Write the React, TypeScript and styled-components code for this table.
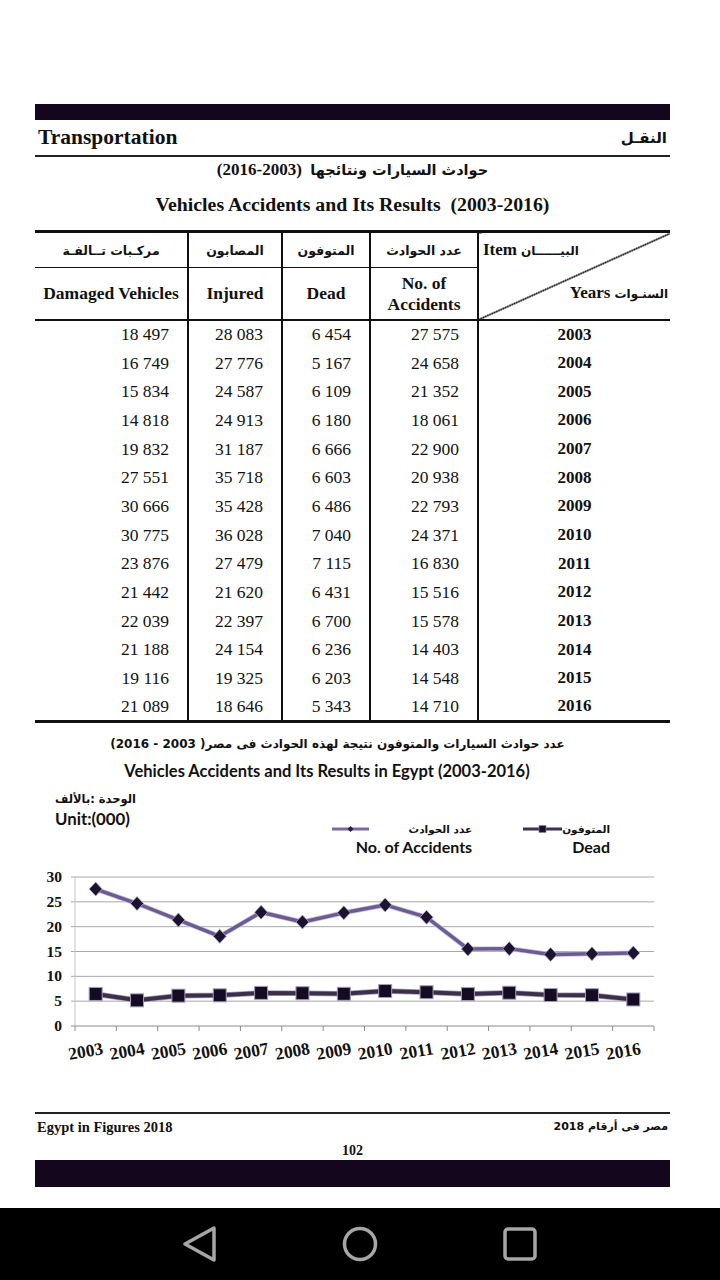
import React from 'react';
import styled, { createGlobalStyle } from 'styled-components';

const SERIF = `"Liberation Serif", "DejaVu Sans", serif`;
const SANS = `Lato, "DejaVu Sans", sans-serif`;
const AR = `"DejaVu Sans", sans-serif`;

const Global = createGlobalStyle`
  html, body { margin: 0; padding: 0; background: #fff; }
  body { font-family: ${SERIF}; color: #111; }
  * { box-sizing: border-box; }
`;

const rows = [
  { y: 2003, acc: '27 575', dead: '6 454', inj: '28 083', dmg: '18 497' },
  { y: 2004, acc: '24 658', dead: '5 167', inj: '27 776', dmg: '16 749' },
  { y: 2005, acc: '21 352', dead: '6 109', inj: '24 587', dmg: '15 834' },
  { y: 2006, acc: '18 061', dead: '6 180', inj: '24 913', dmg: '14 818' },
  { y: 2007, acc: '22 900', dead: '6 666', inj: '31 187', dmg: '19 832' },
  { y: 2008, acc: '20 938', dead: '6 603', inj: '35 718', dmg: '27 551' },
  { y: 2009, acc: '22 793', dead: '6 486', inj: '35 428', dmg: '30 666' },
  { y: 2010, acc: '24 371', dead: '7 040', inj: '36 028', dmg: '30 775' },
  { y: 2011, acc: '16 830', dead: '7 115', inj: '27 479', dmg: '23 876' },
  { y: 2012, acc: '15 516', dead: '6 431', inj: '21 620', dmg: '21 442' },
  { y: 2013, acc: '15 578', dead: '6 700', inj: '22 397', dmg: '22 039' },
  { y: 2014, acc: '14 403', dead: '6 236', inj: '24 154', dmg: '21 188' },
  { y: 2015, acc: '14 548', dead: '6 203', inj: '19 325', dmg: '19 116' },
  { y: 2016, acc: '14 710', dead: '5 343', inj: '18 646', dmg: '21 089' },
];

const accSeries = [27.575, 24.658, 21.352, 18.061, 22.9, 20.938, 22.793, 24.371, 21.9, 15.516, 15.578, 14.403, 14.548, 14.71];
const deadSeries = [6.454, 5.167, 6.109, 6.18, 6.666, 6.603, 6.486, 7.04, 6.8, 6.431, 6.7, 6.236, 6.203, 5.343];

const Screen = styled.div`
  width: 720px;
  height: 1280px;
  display: flex;
  flex-direction: column;
  background: #fff;
`;

const Page = styled.div`
  flex: 1;
  padding: 104px 50px 0 35px;
  display: flex;
  flex-direction: column;
`;

const DarkBar = styled.div<{ $h: number }>`
  height: ${(p) => p.$h}px;
  background: #14061d;
`;

const HeaderRow = styled.div`
  height: 37px;
  display: flex;
  align-items: center;
  justify-content: space-between;
  padding: 0 3px;
  border-bottom: 2px solid #222;
`;

const HeaderEn = styled.span`
  font-family: ${SERIF};
  font-weight: 700;
  font-size: 21.5px;
`;

const HeaderAr = styled.span`
  font-family: ${AR};
  font-weight: 700;
  font-size: 15px;
`;

const TitleAr = styled.div`
  margin-top: 1px;
  line-height: 24px;
  text-align: center;
  font-family: ${SERIF};
  font-weight: 700;
  font-size: 17px;
`;

const ArSpan = styled.span`
  font-family: ${AR};
  font-size: 14.5px;
`;

const TitleEn = styled.div`
  margin-top: 9px;
  line-height: 26px;
  text-align: center;
  font-family: ${SERIF};
  font-weight: 700;
  font-size: 19.8px;
  white-space: pre;
`;

const Table = styled.table`
  margin-top: 13px;
  width: 635px;
  border-collapse: collapse;
  table-layout: fixed;
  border-top: 3px solid #111;
  border-bottom: 3px solid #111;
`;

const HeadAr = styled.th<{ $sep?: boolean }>`
  height: 35px;
  padding: 0;
  font-family: ${AR};
  font-weight: 700;
  font-size: 12.5px;
  text-align: center;
  vertical-align: middle;
  border-bottom: 1px solid #111;
  border-right: ${(p) => (p.$sep ? '2px solid #111' : 'none')};
`;

const HeadEn = styled.th<{ $sep?: boolean }>`
  height: 51px;
  padding: 0;
  font-family: ${SERIF};
  font-weight: 700;
  font-size: 17.5px;
  line-height: 21px;
  text-align: center;
  vertical-align: middle;
  border-bottom: 2px solid #111;
  border-right: ${(p) => (p.$sep ? '2px solid #111' : 'none')};
`;

const ItemCell = styled.th`
  padding: 0;
  vertical-align: top;
  border-bottom: 2px solid #111;
  background: linear-gradient(
    to bottom right,
    transparent calc(50% - 1px),
    #222 calc(50% - 0.5px),
    #222 calc(50% + 0.5px),
    transparent calc(50% + 1px)
  );
`;

const ItemInner = styled.div`
  height: 86px;
  display: flex;
  flex-direction: column;
  justify-content: space-between;
  padding: 8px 2px 16px 4px;
`;

const ItemLabel = styled.div<{ $end?: boolean }>`
  display: flex;
  justify-content: ${(p) => (p.$end ? 'flex-end' : 'flex-start')};
  align-items: baseline;
  gap: 4px;
  line-height: 18px;
`;

const ItemEn = styled.span`
  font-family: ${SERIF};
  font-weight: 700;
  font-size: 17px;
`;

const ItemAr = styled.span`
  font-family: ${AR};
  font-weight: 700;
  font-size: 12px;
`;

const Cell = styled.td<{ $sep?: boolean }>`
  height: 28.5px;
  padding: 0 18px 0 0;
  font-family: ${SERIF};
  font-size: 17.5px;
  text-align: right;
  vertical-align: middle;
  border-right: ${(p) => (p.$sep ? '2px solid #111' : 'none')};
`;

const YearCell = styled.td`
  height: 28.5px;
  padding: 0;
  font-family: ${SERIF};
  font-weight: 700;
  font-size: 17px;
  text-align: center;
  vertical-align: middle;
`;

const ChartTitleAr = styled.div`
  margin-top: 13px;
  line-height: 20px;
  text-align: center;
  font-family: ${AR};
  font-weight: 700;
  font-size: 12px;
  padding-right: 30px;
`;

const ChartTitleEn = styled.div`
  margin-top: 6px;
  line-height: 22px;
  text-align: center;
  font-family: ${SANS};
  font-weight: 700;
  font-size: 16.5px;
  padding-right: 51px;
`;

const ChartHead = styled.div`
  display: flex;
  align-items: flex-start;
  margin-top: 8px;
`;

const Unit = styled.div`
  display: flex;
  flex-direction: column;
  align-items: flex-start;
  padding-left: 20px;
`;

const UnitAr = styled.div`
  line-height: 18px;
  font-family: ${AR};
  font-weight: 700;
  font-size: 11.5px;
`;

const UnitEn = styled.div`
  margin-top: 2px;
  line-height: 18px;
  font-family: ${SANS};
  font-weight: 700;
  font-size: 16.8px;
`;

const Legend = styled.div`
  margin-left: auto;
  margin-top: 30px;
  padding-right: 60px;
  display: flex;
  gap: 51px;
`;

const LegendItem = styled.div`
  display: flex;
  flex-direction: column;
`;

const LegendTop = styled.div<{ $gap: number }>`
  display: flex;
  align-items: center;
  justify-content: space-between;
  gap: ${(p) => p.$gap}px;
  height: 18px;
`;

const LegendAr = styled.span`
  font-family: ${AR};
  font-weight: 700;
  font-size: 10.5px;
`;

const LegendEn = styled.div`
  line-height: 18px;
  text-align: right;
  font-family: ${SANS};
  font-weight: 700;
  font-size: 16px;
`;

const ChartBox = styled.div`
  margin-top: 10px;
  height: 200px;
`;

const Footer = styled.div`
  margin-top: 46px;
  border-top: 2px solid #222;
  padding: 4px 2px 0;
  display: flex;
  justify-content: space-between;
  line-height: 18px;
`;

const FooterEn = styled.span`
  font-family: ${SERIF};
  font-weight: 700;
  font-size: 14.5px;
`;

const FooterAr = styled.span`
  font-family: ${AR};
  font-weight: 700;
  font-size: 11px;
`;

const PageNo = styled.div`
  margin-top: 6px;
  line-height: 18px;
  text-align: center;
  font-family: ${SERIF};
  font-weight: 700;
  font-size: 14px;
`;

const NavBar = styled.div`
  height: 72px;
  background: #000;
  display: flex;
  align-items: center;
  justify-content: center;
  gap: 124px;
`;

const NavIcon = styled.svg`
  width: 36px;
  height: 36px;
  display: block;
`;

function Swatch({ kind }: { kind: 'acc' | 'dead' }) {
  if (kind === 'acc') {
    return (
      <svg width="37" height="8" viewBox="0 0 37 8">
        <line x1="0" y1="4" x2="37" y2="4" stroke="#7a6aa0" strokeWidth="3" />
        <polygon points="18.5,1 21.5,4 18.5,7 15.5,4" fill="#2a1e40" />
      </svg>
    );
  }
  return (
    <svg width="39" height="8" viewBox="0 0 39 8">
      <line x1="0" y1="4" x2="39" y2="4" stroke="#3d3252" strokeWidth="3" />
      <rect x="16" y="0.5" width="7" height="7" fill="#1a1028" stroke="#8a80a6" strokeWidth="0.6" />
    </svg>
  );
}

function Chart() {
  const W = 635;
  const H = 200;
  const X0 = 40;
  const X1 = 619;
  const Y0 = 160;
  const YT = 11;
  const cw = (X1 - X0) / 14;
  const sy = (Y0 - YT) / 30;
  const px = (i: number) => X0 + cw * (i + 0.5);
  const py = (v: number) => Y0 - v * sy;
  const ticks = [0, 5, 10, 15, 20, 25, 30];
  const accPts = accSeries.map((v, i) => `${px(i)},${py(v)}`).join(' ');
  const deadPts = deadSeries.map((v, i) => `${px(i)},${py(v)}`).join(' ');
  return (
    <svg width={W} height={H} viewBox={`0 0 ${W} ${H}`} style={{ display: 'block' }}>
      {ticks.map((t) => (
        <g key={t}>
          {t > 0 && <line x1={36} x2={X1} y1={py(t)} y2={py(t)} stroke="#a8a8a8" strokeWidth="1" />}
          <text
            x={27}
            y={py(t) + 5}
            textAnchor="end"
            fontFamily="Liberation Serif, serif"
            fontWeight="700"
            fontSize="15.5"
            fill="#111"
          >
            {t}
          </text>
        </g>
      ))}
      <line x1={X0} x2={X0} y1={YT} y2={Y0} stroke="#c4c4c4" strokeWidth="1" />
      <line x1={36} x2={X1} y1={Y0} y2={Y0} stroke="#8c8c8c" strokeWidth="1" />
      {Array.from({ length: 15 }).map((_, i) => (
        <line key={i} x1={X0 + cw * i} x2={X0 + cw * i} y1={Y0} y2={Y0 + 5} stroke="#8c8c8c" strokeWidth="1" />
      ))}
      <polyline points={accPts} fill="none" stroke="#c9c1dc" strokeWidth="5" strokeLinejoin="round" />
      <polyline points={accPts} fill="none" stroke="#6b5b93" strokeWidth="3.4" strokeLinejoin="round" />
      {accSeries.map((v, i) => {
        const x = px(i);
        const y = py(v);
        return (
          <polygon
            key={i}
            points={`${x},${y - 7} ${x + 6.5},${y} ${x},${y + 7} ${x - 6.5},${y}`}
            fill="#1d1230"
            stroke="#b4abc9"
            strokeWidth="0.8"
          />
        );
      })}
      <polyline points={deadPts} fill="none" stroke="#a89fbd" strokeWidth="5.5" strokeLinejoin="round" />
      <polyline points={deadPts} fill="none" stroke="#3a3049" strokeWidth="4" strokeLinejoin="round" />
      {deadSeries.map((v, i) => {
        const x = px(i);
        const y = py(v);
        return (
          <rect
            key={i}
            x={x - 6.5}
            y={y - 6.5}
            width="13"
            height="13"
            fill="#150b22"
            stroke="#a59cbc"
            strokeWidth="1"
          />
        );
      })}
      {rows.map((r, i) => {
        const cx = px(i) - 10;
        const cy = 185;
        return (
          <text
            key={r.y}
            x={cx}
            y={cy + 6}
            textAnchor="middle"
            transform={`rotate(-10 ${cx} ${cy})`}
            fontFamily="Liberation Serif, serif"
            fontWeight="700"
            fontSize="17.5"
            fill="#111"
          >
            {r.y}
          </text>
        );
      })}
    </svg>
  );
}

export default function App() {
  return (
    <>
      <Global />
      <Screen>
        <Page>
          <DarkBar $h={16} />
          <HeaderRow>
            <HeaderEn>Transportation</HeaderEn>
            <HeaderAr dir="rtl">النقـل</HeaderAr>
          </HeaderRow>
          <TitleAr>
            (2016-2003)&nbsp;&nbsp;<ArSpan>حوادث السيارات ونتائجها</ArSpan>
          </TitleAr>
          <TitleEn>Vehicles Accidents and Its Results  (2003-2016)</TitleEn>
          <Table>
            <colgroup>
              <col style={{ width: 153 }} />
              <col style={{ width: 94 }} />
              <col style={{ width: 88 }} />
              <col style={{ width: 108 }} />
              <col style={{ width: 192 }} />
            </colgroup>
            <thead>
              <tr>
                <HeadAr $sep dir="rtl">مركـبات تــالفـة</HeadAr>
                <HeadAr $sep dir="rtl">المصابون</HeadAr>
                <HeadAr $sep dir="rtl">المتوفون</HeadAr>
                <HeadAr $sep dir="rtl">عدد الحوادث</HeadAr>
                <ItemCell rowSpan={2}>
                  <ItemInner>
                    <ItemLabel>
                      <ItemEn>Item</ItemEn>
                      <ItemAr>البيــــــان</ItemAr>
                    </ItemLabel>
                    <ItemLabel $end>
                      <ItemEn>Years</ItemEn>
                      <ItemAr>السنـوات</ItemAr>
                    </ItemLabel>
                  </ItemInner>
                </ItemCell>
              </tr>
              <tr>
                <HeadEn $sep>Damaged Vehicles</HeadEn>
                <HeadEn $sep>Injured</HeadEn>
                <HeadEn $sep>Dead</HeadEn>
                <HeadEn $sep>
                  No. of
                  <br />
                  Accidents
                </HeadEn>
              </tr>
            </thead>
            <tbody>
              {rows.map((r) => (
                <tr key={r.y}>
                  <Cell $sep>{r.dmg}</Cell>
                  <Cell $sep>{r.inj}</Cell>
                  <Cell $sep>{r.dead}</Cell>
                  <Cell $sep>{r.acc}</Cell>
                  <YearCell>{r.y}</YearCell>
                </tr>
              ))}
            </tbody>
          </Table>
          <ChartTitleAr dir="rtl">
            عدد حوادث السيارات والمتوفون نتيجة لهذه الحوادث فى مصر( 2003 - 2016)
          </ChartTitleAr>
          <ChartTitleEn>Vehicles Accidents and Its Results in Egypt (2003-2016)</ChartTitleEn>
          <ChartHead>
            <Unit>
              <UnitAr dir="rtl">الوحدة :بالألف</UnitAr>
              <UnitEn>Unit:(000)</UnitEn>
            </Unit>
            <Legend>
              <LegendItem>
                <LegendTop $gap={40}>
                  <Swatch kind="acc" />
                  <LegendAr dir="rtl">عدد الحوادث</LegendAr>
                </LegendTop>
                <LegendEn>No. of Accidents</LegendEn>
              </LegendItem>
              <LegendItem>
                <LegendTop $gap={0}>
                  <Swatch kind="dead" />
                  <LegendAr dir="rtl">المتوفون</LegendAr>
                </LegendTop>
                <LegendEn>Dead</LegendEn>
              </LegendItem>
            </Legend>
          </ChartHead>
          <ChartBox>
            <Chart />
          </ChartBox>
          <Footer>
            <FooterEn>Egypt in Figures 2018</FooterEn>
            <FooterAr dir="rtl">مصر فى أرقام 2018</FooterAr>
          </Footer>
          <PageNo>102</PageNo>
          <DarkBar $h={27} />
        </Page>
        <NavBar>
          <NavIcon viewBox="0 0 36 36">
            <polygon
              points="32,3 3,19 32,35"
              fill="none"
              stroke="#a6a6a6"
              strokeWidth="3.5"
              strokeLinejoin="round"
              transform="translate(0 -1)"
            />
          </NavIcon>
          <NavIcon viewBox="0 0 36 36">
            <circle cx="18" cy="18" r="15.5" fill="none" stroke="#a6a6a6" strokeWidth="3.5" />
          </NavIcon>
          <NavIcon viewBox="0 0 36 36">
            <rect x="3" y="3" width="30" height="30" rx="3" fill="none" stroke="#a6a6a6" strokeWidth="3.5" />
          </NavIcon>
        </NavBar>
      </Screen>
    </>
  );
}
